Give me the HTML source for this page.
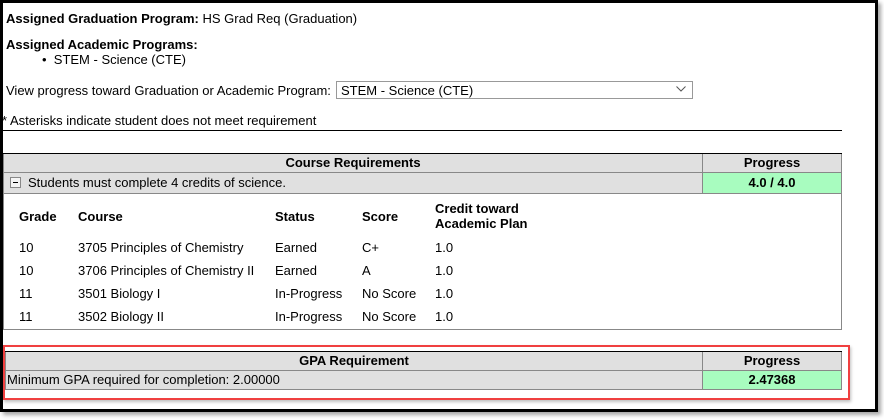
<!DOCTYPE html>
<html><head><style>
body{margin:0;width:884px;height:420px;background:#fff;position:relative;font-family:"Liberation Sans",Arial,sans-serif;font-size:13px;color:#000;overflow:hidden}
.a{position:absolute;white-space:nowrap;line-height:15px}
.b{font-weight:bold}
.frame{position:absolute;left:0;top:0;width:872px;height:406px;border:3px solid #000;box-shadow:3px 3px 4px rgba(0,0,0,.35)}
.hdr{position:absolute;background:#e0e0e0;border:1px solid #888;box-sizing:border-box;text-align:center;font-weight:bold;line-height:17px}
.grn{background:#a8fcbf}
</style></head><body>
<div class="frame"></div>
<div class="a" style="left:6px;top:11px"><span class="b">Assigned Graduation Program:</span> HS Grad Req (Graduation)</div>
<div class="a b" style="left:6px;top:37px">Assigned Academic Programs:</div>
<div class="a" style="left:42px;top:52px">&bull;&nbsp; STEM - Science (CTE)</div>
<div class="a" style="left:6px;top:83px">View progress toward Graduation or Academic Program:</div>
<div style="position:absolute;left:336px;top:81px;width:357px;height:18px;border:1px solid #999;box-sizing:border-box"></div>
<div class="a" style="left:341px;top:83px">STEM - Science (CTE)</div>
<svg style="position:absolute;left:676px;top:86px" width="10" height="7"><path d="M0.5 0.5 L5 5 L9.5 0.5" fill="none" stroke="#555" stroke-width="1"/></svg>
<div class="a" style="left:2px;top:113px">* Asterisks indicate student does not meet requirement</div>
<div style="position:absolute;left:3px;top:130px;width:839px;height:1px;background:#000"></div>
<div style="position:absolute;left:3px;top:153px;width:839px;height:2px;background:#000"></div>
<div class="hdr" style="left:3px;top:154px;width:700px;height:19px;border-top:none">Course Requirements</div>
<div class="hdr" style="left:702px;top:154px;width:140px;height:19px;border-top:none">Progress</div>
<div class="hdr" style="left:3px;top:172px;width:700px;height:22px;text-align:left;font-weight:normal;line-height:20px;padding-left:24px">Students must complete 4 credits of science.</div>
<div style="position:absolute;left:10px;top:177px;width:11px;height:11px;border:1px solid #888;box-sizing:border-box;background:#f4f4f4"><div style="position:absolute;left:2px;top:4px;width:5px;height:1px;background:#000"></div></div>
<div class="hdr grn" style="left:702px;top:172px;width:140px;height:22px;line-height:20px">4.0 / 4.0</div>
<div style="position:absolute;left:3px;top:193px;width:839px;height:137px;border:1px solid #888;border-top:none;box-sizing:border-box"></div>
<div class="a b" style="left:19px;top:209px">Grade</div>
<div class="a b" style="left:78px;top:209px">Course</div>
<div class="a b" style="left:275px;top:209px">Status</div>
<div class="a b" style="left:362px;top:209px">Score</div>
<div class="a b" style="left:435px;top:201px">Credit toward<br>Academic Plan</div>
<div class="a" style="left:19px;top:240px">10</div><div class="a" style="left:78px;top:240px">3705 Principles of Chemistry</div><div class="a" style="left:275px;top:240px">Earned</div><div class="a" style="left:362px;top:240px">C+</div><div class="a" style="left:435px;top:240px">1.0</div>
<div class="a" style="left:19px;top:263px">10</div><div class="a" style="left:78px;top:263px">3706 Principles of Chemistry II</div><div class="a" style="left:275px;top:263px">Earned</div><div class="a" style="left:362px;top:263px">A</div><div class="a" style="left:435px;top:263px">1.0</div>
<div class="a" style="left:19px;top:286px">11</div><div class="a" style="left:78px;top:286px">3501 Biology I</div><div class="a" style="left:275px;top:286px">In-Progress</div><div class="a" style="left:362px;top:286px">No Score</div><div class="a" style="left:435px;top:286px">1.0</div>
<div class="a" style="left:19px;top:309px">11</div><div class="a" style="left:78px;top:309px">3502 Biology II</div><div class="a" style="left:275px;top:309px">In-Progress</div><div class="a" style="left:362px;top:309px">No Score</div><div class="a" style="left:435px;top:309px">1.0</div>
<div style="position:absolute;left:3px;top:345px;width:847px;height:55px;border:2px solid #f04040;box-sizing:border-box;box-shadow:1px 2px 3px rgba(0,0,0,.25)"></div>
<div style="position:absolute;left:5px;top:351px;width:837px;height:2px;background:#000"></div>
<div class="hdr" style="left:5px;top:352px;width:698px;height:19px;border-top:none">GPA Requirement</div>
<div class="hdr" style="left:702px;top:352px;width:140px;height:19px;border-top:none">Progress</div>
<div class="hdr" style="left:5px;top:370px;width:698px;height:20px;text-align:left;font-weight:normal;line-height:18px;padding-left:1px">Minimum GPA required for completion: 2.00000</div>
<div class="hdr grn" style="left:702px;top:370px;width:140px;height:20px;line-height:18px">2.47368</div>
</body></html>
